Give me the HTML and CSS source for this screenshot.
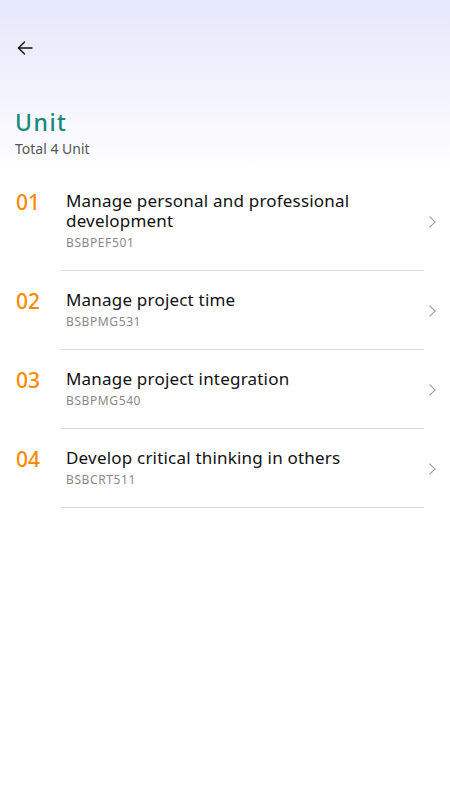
FILE: index.html
```html
<!DOCTYPE html>
<html lang="en">
<head>
  <meta charset="UTF-8">
  <meta name="viewport" content="width=device-width, initial-scale=1.0">
  <title>Unit</title>
  <link rel="stylesheet" href="styles.css">
</head>
<body>
  <div class="page">
    <header class="top">
      <button class="back" aria-label="Back">
        <svg width="16" height="16" viewBox="0 0 16 16" fill="none" stroke="#111" stroke-width="1.4" stroke-linecap="round" stroke-linejoin="round">
          <path d="M15 8H1.5"/>
          <path d="M7.5 2L1.5 8l6 6"/>
        </svg>
      </button>
      <h1 class="title">Unit</h1>
      <p class="subtitle">Total 4 Unit</p>
    </header>

    <ul class="unit-list">
      <li class="unit">
        <span class="unit-no">01</span>
        <div class="unit-body">
          <div class="unit-name">Manage personal and professional development</div>
          <div class="unit-code">BSBPEF501</div>
        </div>
        <span class="chevron"></span>
      </li>
      <li class="unit">
        <span class="unit-no">02</span>
        <div class="unit-body">
          <div class="unit-name">Manage project time</div>
          <div class="unit-code">BSBPMG531</div>
        </div>
        <span class="chevron"></span>
      </li>
      <li class="unit">
        <span class="unit-no">03</span>
        <div class="unit-body">
          <div class="unit-name">Manage project integration</div>
          <div class="unit-code">BSBPMG540</div>
        </div>
        <span class="chevron"></span>
      </li>
      <li class="unit">
        <span class="unit-no">04</span>
        <div class="unit-body">
          <div class="unit-name">Develop critical thinking in others</div>
          <div class="unit-code">BSBCRT511</div>
        </div>
        <span class="chevron"></span>
      </li>
    </ul>
  </div>
</body>
</html>
```

FILE: styles.css
```css
html, body {
  margin: 0;
  padding: 0;
  background: #fff;
}

body {
  font-family: 'Noto Sans', sans-serif;
  color: #111;
}

.page {
  width: 450px;
  min-height: 800px;
}

.top {
  background: linear-gradient(to bottom, #e5e7fb 0%, #f3f3fd 55%, #ffffff 100%);
  padding: 40px 15px 6px;
  height: 126px;
}

.back {
  display: block;
  border: none;
  background: none;
  padding: 0;
  margin: 0 0 0 2px;
  width: 16px;
  height: 16px;
  cursor: pointer;
}

.title {
  margin: 51px 0 0;
  font-size: 23px;
  font-weight: 500;
  letter-spacing: 1.5px;
  line-height: 30px;
  color: #168a7b;
}

.subtitle {
  margin: 2px 0 0;
  font-size: 14px;
  line-height: 20px;
  color: #555;
}

.unit-list {
  list-style: none;
  margin: 0;
  padding: 0;
}

.unit {
  display: flex;
  align-items: center;
  padding-left: 16px;
}

.unit-no {
  align-self: flex-start;
  width: 45px;
  padding-top: 18px;
  font-size: 21px;
  font-weight: 500;
  line-height: 24px;
  color: #ff8a00;
}

.unit-body {
  width: 358px;
  padding: 19px 0 19px 5px;
  border-bottom: 1px solid #dcdcdc;
}

.unit-name {
  font-size: 17px;
  line-height: 20px;
  letter-spacing: 0.2px;
  color: #111;
}

.unit-code {
  margin-top: 4px;
  font-size: 12px;
  line-height: 16px;
  letter-spacing: 0.6px;
  color: #888;
}

.chevron {
  width: 7px;
  height: 7px;
  margin-left: 2px;
  border-top: 1.3px solid #999;
  border-right: 1.3px solid #999;
  transform: rotate(45deg);
}
```
